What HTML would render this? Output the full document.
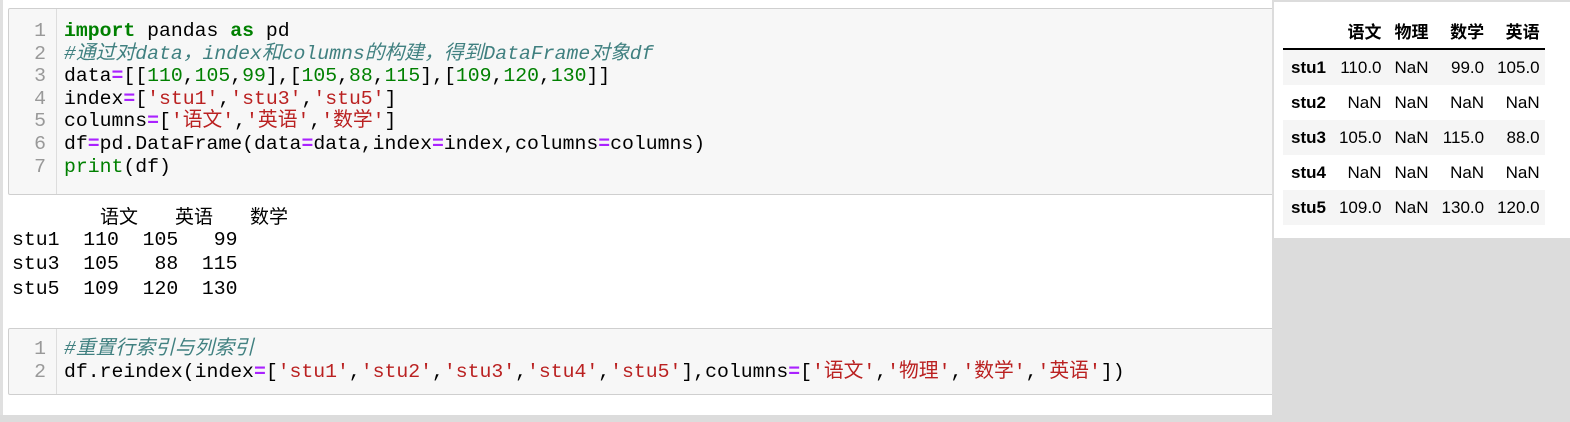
<!DOCTYPE html>
<html><head><meta charset="utf-8"><style>
body{margin:0;width:1570px;height:422px;background:#dcdcdc;position:relative;overflow:hidden}
.pg{position:absolute;left:0;top:0;width:1272px;height:415px;background:#fff;overflow:hidden}
.lb{position:absolute;left:0;top:0;width:3px;height:415px;background:#e0e0e0}
.cell{position:absolute;left:8px;background:#f7f7f7;border:1px solid #cfcfcf;border-radius:2px;width:1280px;box-sizing:border-box}
.g{position:absolute;left:0;top:0;bottom:0;width:47px;border-right:1px solid #ddd;}
pre{margin:0;font-family:"Liberation Mono","Noto Sans CJK SC",monospace;font-size:19.8px;line-height:22.6px;color:#000;white-space:pre}
.ln{position:absolute;left:0;width:37px;text-align:right;color:#999}
.code{position:absolute;left:55px}
.k{color:#008000;font-weight:bold}.c{color:#408080;font-style:italic}.n{color:#008000}.s{color:#ba2121}.o{color:#aa22ff;font-weight:bold}.b{color:#008000}
.out{position:absolute;left:12px;top:228px;line-height:24.3px}
.hd{position:absolute;top:204px;font-family:"Noto Sans CJK SC",sans-serif;font-size:19px;line-height:24px}
.rp{position:absolute;left:1274px;top:2px;width:296px;height:236px;background:#fff}
table{position:absolute;left:9px;top:10px;border-collapse:collapse;font-family:"Liberation Sans","Noto Sans CJK SC",sans-serif;font-size:17px;color:#000}
th,td{text-align:right;padding:0 5px 0 8px;height:35px}
thead th{height:36px;border-bottom:2px solid #000;font-weight:bold;vertical-align:middle}
tbody th{text-align:left;padding-left:8px}
tbody tr:nth-child(odd){background:#f5f5f5}
</style></head><body>
<div class="pg">
<div class="lb"></div>
<div class="cell" style="top:8px;height:187px"><div class="g"></div>
<pre class="ln" style="top:11px">1
2
3
4
5
6
7</pre>
<pre class="code" style="top:11px"><span class="k">import</span> pandas <span class="k">as</span> pd
<span class="c">#通过对data，index和columns的构建，得到DataFrame对象df</span>
data<span class="o">=</span>[[<span class="n">110</span>,<span class="n">105</span>,<span class="n">99</span>],[<span class="n">105</span>,<span class="n">88</span>,<span class="n">115</span>],[<span class="n">109</span>,<span class="n">120</span>,<span class="n">130</span>]]
index<span class="o">=</span>[<span class="s">'stu1'</span>,<span class="s">'stu3'</span>,<span class="s">'stu5'</span>]
columns<span class="o">=</span>[<span class="s">'语文'</span>,<span class="s">'英语'</span>,<span class="s">'数学'</span>]
df<span class="o">=</span>pd.DataFrame(data<span class="o">=</span>data,index<span class="o">=</span>index,columns<span class="o">=</span>columns)
<span class="b">print</span>(df)</pre>
</div>
<div class="hd" style="left:100px">语文</div>
<div class="hd" style="left:175px">英语</div>
<div class="hd" style="left:250px">数学</div>
<pre class="out">stu1  110  105   99
stu3  105   88  115
stu5  109  120  130</pre>
<div class="cell" style="top:328px;height:67px"><div class="g"></div>
<pre class="ln" style="top:9px">1
2</pre>
<pre class="code" style="top:9px"><span class="c">#重置行索引与列索引</span>
df.reindex(index<span class="o">=</span>[<span class="s">'stu1'</span>,<span class="s">'stu2'</span>,<span class="s">'stu3'</span>,<span class="s">'stu4'</span>,<span class="s">'stu5'</span>],columns<span class="o">=</span>[<span class="s">'语文'</span>,<span class="s">'物理'</span>,<span class="s">'数学'</span>,<span class="s">'英语'</span>])</pre>
</div>
</div>
<div class="rp">
<table>
<thead><tr><th></th><th>语文</th><th>物理</th><th>数学</th><th>英语</th></tr></thead>
<tbody>
<tr><th>stu1</th><td>110.0</td><td>NaN</td><td>99.0</td><td>105.0</td></tr>
<tr><th>stu2</th><td>NaN</td><td>NaN</td><td>NaN</td><td>NaN</td></tr>
<tr><th>stu3</th><td>105.0</td><td>NaN</td><td>115.0</td><td>88.0</td></tr>
<tr><th>stu4</th><td>NaN</td><td>NaN</td><td>NaN</td><td>NaN</td></tr>
<tr><th>stu5</th><td>109.0</td><td>NaN</td><td>130.0</td><td>120.0</td></tr>
</tbody></table>
</div>
</body></html>
